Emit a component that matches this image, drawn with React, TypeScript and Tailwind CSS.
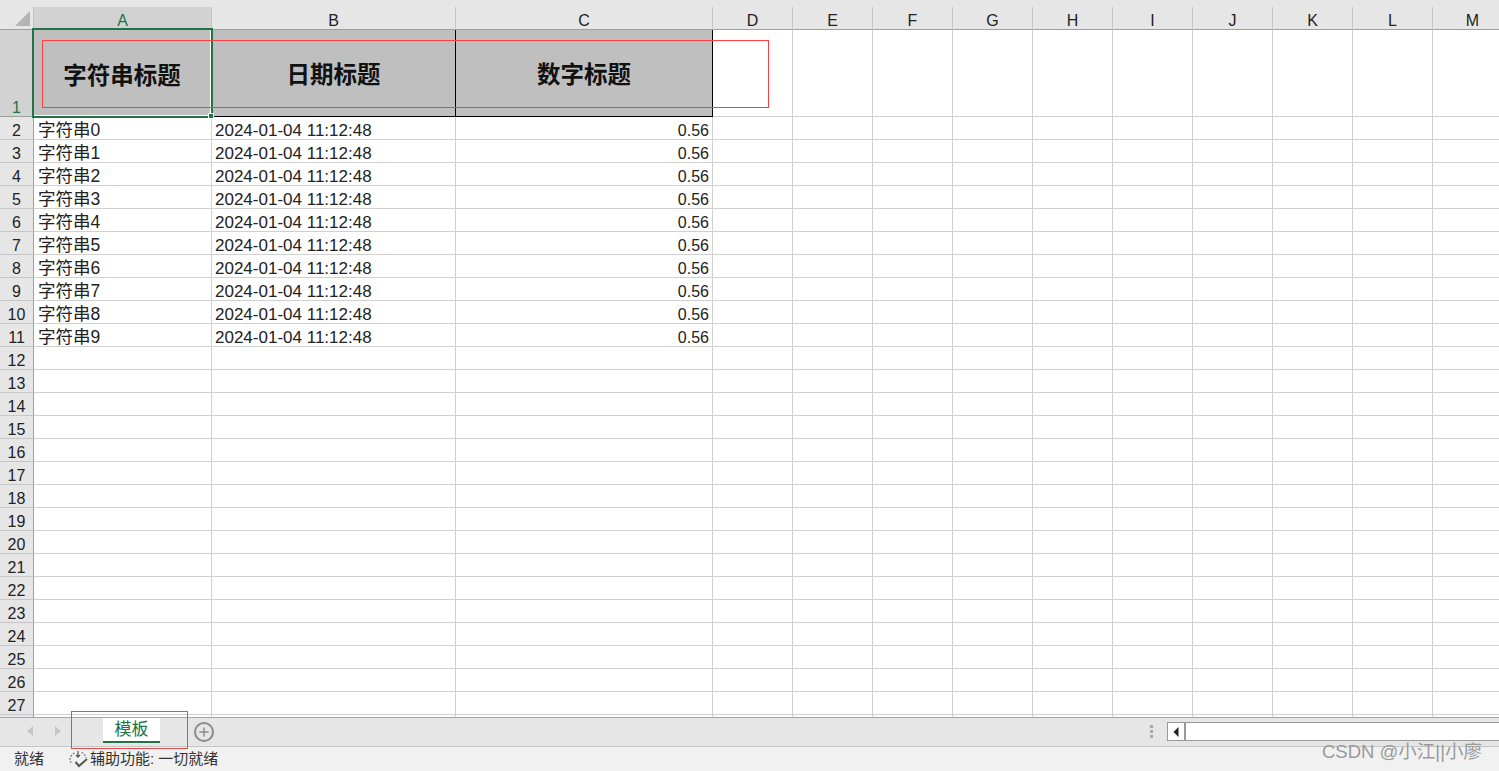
import { Plus } from "lucide-react";

const font = "font-['Liberation_Sans','Noto_Sans_CJK_SC',sans-serif]";
const columns = [
  { name: "A", width: "w-[178px]" },
  { name: "B", width: "w-[244px]" },
  { name: "C", width: "w-[257px]" },
  { name: "D", width: "w-[80px]" },
  { name: "E", width: "w-[80px]" },
  { name: "F", width: "w-[80px]" },
  { name: "G", width: "w-[80px]" },
  { name: "H", width: "w-[80px]" },
  { name: "I", width: "w-[80px]" },
  { name: "J", width: "w-[80px]" },
  { name: "K", width: "w-[80px]" },
  { name: "L", width: "w-[80px]" },
  { name: "M", width: "w-[80px]" },
];
const rows = Array.from({ length: 27 }, (_, i) => i + 2);

function ColumnHeader() {
  return (
    <div className="flex h-[30px] shrink-0 bg-[#e6e6e6] pt-[7px]">
      <div className="flex h-[23px] w-[34px] shrink-0 items-end justify-end border-b border-b-[#9f9f9f] border-r border-r-[#c6c6c6] bg-[#e6e6e6] pb-[3px] pr-[3px]">
        <div className="h-0 w-0 border-b-[15px] border-l-[15px] border-b-[#b4b4b4] border-l-transparent" />
      </div>
      {columns.map((col, i) => (
        <div
          key={col.name}
          className={`flex h-[23px] shrink-0 items-center justify-center border-b border-b-[#9f9f9f] border-r border-r-[#c6c6c6] pt-[5px] text-[16px] ${col.width} ${
            i === 0 ? "bg-[#d2d2d2] text-[#217346]" : "text-[#222]"
          }`}
        >
          {col.name}
        </div>
      ))}
    </div>
  );
}

function TitleRow() {
  return (
    <div className="flex h-[87px] shrink-0">
      <div className="flex w-[34px] shrink-0 items-end justify-center border-b border-b-[#9f9f9f] border-r border-r-[#9f9f9f] bg-[#d2d2d2] text-[16px] leading-[16px] text-[#217346]">
        1
      </div>
      <div className="flex w-[178px] shrink-0 items-center justify-center bg-[#bfbfbf] pr-[2px] pt-[6px] text-[23.5px] font-bold text-[#111]">
        字符串标题
      </div>
      <div className="flex w-[244px] shrink-0 items-center justify-center border-b border-r border-black bg-[#bfbfbf] pt-[6px] text-[23.5px] font-bold text-[#111]">
        日期标题
      </div>
      <div className="flex w-[257px] shrink-0 items-center justify-center border-b border-r border-black bg-[#bfbfbf] pt-[6px] text-[23.5px] font-bold text-[#111]">
        数字标题
      </div>
      {columns.slice(3).map((col) => (
        <div key={col.name} className={`shrink-0 border-b border-r border-[#d0d0d0] ${col.width}`} />
      ))}
    </div>
  );
}

function DataRow({ num }: { num: number }) {
  const hasData = num <= 11;
  return (
    <div className="flex h-[23px] shrink-0">
      <div className="flex w-[34px] shrink-0 items-center justify-center border-b border-b-[#c6c6c6] border-r border-r-[#9f9f9f] bg-[#e6e6e6] pt-[5px] text-[16px] text-[#222]">
        {num < 28 && num}
      </div>
      <div className="flex w-[178px] shrink-0 items-center border-b border-r border-[#d0d0d0] pl-[4px] pt-[5px] text-[17.5px] text-[#222]">
        {hasData && `字符串${num - 2}`}
      </div>
      <div className="flex w-[244px] shrink-0 items-center border-b border-r border-[#d0d0d0] pl-[3px] pt-[5px] text-[17px] text-[#222]">
        {hasData && "2024-01-04 11:12:48"}
      </div>
      <div className="flex w-[257px] shrink-0 items-center justify-end border-b border-r border-[#d0d0d0] pr-[3px] pt-[5px] text-[16px] text-[#222]">
        {hasData && "0.56"}
      </div>
      {columns.slice(3).map((col) => (
        <div key={col.name} className={`shrink-0 border-b border-r border-[#d0d0d0] ${col.width}`} />
      ))}
    </div>
  );
}

function TabBar() {
  return (
    <div className="flex h-[30px] shrink-0 items-start border-y border-[#a6a6a6] border-b-[#c6c6c6] bg-[#e6e6e6]">
      <div className="flex h-full w-[103px] shrink-0 items-center pb-[2px] pl-[26px]">
        <svg width="8" height="10" viewBox="0 0 8 10" className="fill-[#c6c6c6]">
          <path d="M7 0v10L1 5z" />
        </svg>
        <svg width="8" height="10" viewBox="0 0 8 10" className="ml-[20px] fill-[#c6c6c6]">
          <path d="M1 0v10l6-5z" />
        </svg>
      </div>
      <div className="flex h-[25px] w-[57px] shrink-0 items-center justify-center border-b-2 border-[#217346] bg-white text-[17px] text-[#217346]">
        模板
      </div>
      <div className="ml-[34px] mt-[4px] flex h-[20px] w-[20px] shrink-0 items-center justify-center rounded-full border-2 border-[#8a8a8a]">
        <Plus size={14} strokeWidth={2.5} className="text-[#8a8a8a]" />
      </div>
      <div className="ml-auto flex h-full items-start">
        <div className="mt-[7px] flex w-[4px] flex-col gap-[2px]">
          <span className="h-[3px] w-[3px] bg-[#a8a8a8]" />
          <span className="h-[3px] w-[3px] bg-[#a8a8a8]" />
          <span className="h-[3px] w-[3px] bg-[#a8a8a8]" />
        </div>
        <div className="ml-[13px] mt-[4px] flex h-[19px] w-[332px] border border-r-0 border-[#999] bg-white">
          <div className="flex w-[18px] items-center justify-center border-r-2 border-[#999]">
            <svg width="6" height="10" viewBox="0 0 6 10" className="fill-[#222]">
              <path d="M5.5 0v10L.5 5z" />
            </svg>
          </div>
        </div>
      </div>
    </div>
  );
}

function StatusBar() {
  return (
    <div className="flex h-[24px] shrink-0 items-center bg-[#f1f1f1] pl-[14px] text-[15px] text-[#333]">
      <span>就绪</span>
      <svg width="20" height="20" viewBox="0 0 20 20" fill="none" className="ml-[25px] shrink-0">
        <path d="M5.5 4A7.5 7.5 0 0 0 1 10c0 2 .8 3.5 2.5 4.8" stroke="#777" strokeWidth="1.2" strokeDasharray="2 1.3" />
        <path d="M12.5 3.5A7 7 0 0 1 17 9" stroke="#777" strokeWidth="1.2" strokeDasharray="2 1.3" />
        <path d="M9 2v6M7 6l2 2.2L11 6" stroke="#555" strokeWidth="1.2" />
        <path d="M6.5 13l3.5 4L18 10" stroke="#555" strokeWidth="2" />
      </svg>
      <span className="ml-[1px]">辅助功能: 一切就绪</span>
    </div>
  );
}

export default function App() {
  return (
    <div className={`relative flex h-[771px] w-[1499px] flex-col overflow-hidden bg-white ${font}`}>
      <ColumnHeader />
      <div className="flex h-[687px] shrink-0 flex-col overflow-hidden">
        <TitleRow />
        {rows.map((num) => (
          <DataRow key={num} num={num} />
        ))}
      </div>
      <TabBar />
      <StatusBar />
      {/* selected cell A1 */}
      <div className="absolute left-[32px] top-[28px] h-[90px] w-[181px] border-2 border-[#217346]">
        <div className="h-full w-full border-b border-r border-white" />
      </div>
      <div className="absolute left-[208px] top-[113px] h-[6px] w-[6px] border border-white bg-[#217346]" />
      {/* annotations drawn on the screenshot */}
      <div className="absolute left-[42px] top-[40px] h-[68px] w-[727px] border border-[#ff4040]" />
      <div className="absolute left-[71px] top-[711px] h-[38px] w-[117px] border border-[#e04b4b]" />
      <div className="absolute left-[1322px] top-[738px] text-[18.5px] text-[#9a9a9a]">CSDN @小江||小廖</div>
    </div>
  );
}
